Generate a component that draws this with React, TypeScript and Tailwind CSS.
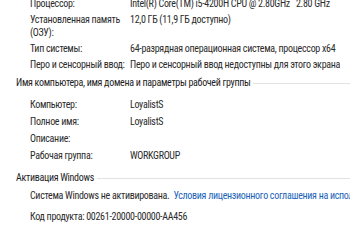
import React from 'react';

function Row({ label, children }: { label: React.ReactNode; children?: React.ReactNode }) {
  return (
    <div className="flex">
      <div className="w-[100px] shrink-0 whitespace-nowrap">{label}</div>
      <div className="whitespace-nowrap">{children}</div>
    </div>
  );
}

function Header({ title }: { title: string }) {
  return (
    <div className="flex items-center pl-[16px]">
      <span className="whitespace-nowrap text-[#1e1e1e]">{title}</span>
      <div className="ml-[3px] mt-[2px] h-px flex-1 bg-[#e2e2e2]" />
    </div>
  );
}

export default function App() {
  return (
    <div
      className="h-[250px] w-[350px] overflow-hidden bg-white text-[10px] leading-[13px] tracking-[-0.3px] text-[#2b2b2b]"
      style={{ fontFamily: '"Roboto Condensed", Roboto, sans-serif' }}
    >
      <div className="-mt-[3px] flex flex-col gap-[3px] pl-[30px]">
        <Row label="Процессор:">Intel(R) Core(TM) i5-4200H CPU @ 2.80GHz&nbsp;&nbsp; 2.80 GHz</Row>
        <Row label={<>Установленная память<br />(ОЗУ):</>}>12,0 ГБ (11,9 ГБ доступно)</Row>
        <Row label="Тип системы:">64-разрядная операционная система, процессор x64</Row>
        <Row label="Перо и сенсорный ввод:">Перо и сенсорный ввод недоступны для этого экрана</Row>
      </div>

      <div className="mt-[5px]">
        <Header title="Имя компьютера, имя домена и параметры рабочей группы" />
      </div>
      <div className="mt-[9px] flex flex-col gap-[4px] pl-[30px]">
        <Row label="Компьютер:">LoyalistS</Row>
        <Row label="Полное имя:">LoyalistS</Row>
        <Row label="Описание:" />
        <Row label="Рабочая группа:">WORKGROUP</Row>
      </div>

      <div className="mt-[9px]">
        <Header title="Активация Windows" />
      </div>
      <div className="mt-[5px] flex flex-col gap-[8px] pl-[30px]">
        <div className="whitespace-nowrap">
          Система Windows не активирована.&nbsp;&nbsp;
          <span className="text-[#1a63b8]">Условия лицензионного соглашения на использование программного обеспечения</span>
        </div>
        <div className="whitespace-nowrap">Код продукта: 00261-20000-00000-AA456</div>
      </div>
    </div>
  );
}
